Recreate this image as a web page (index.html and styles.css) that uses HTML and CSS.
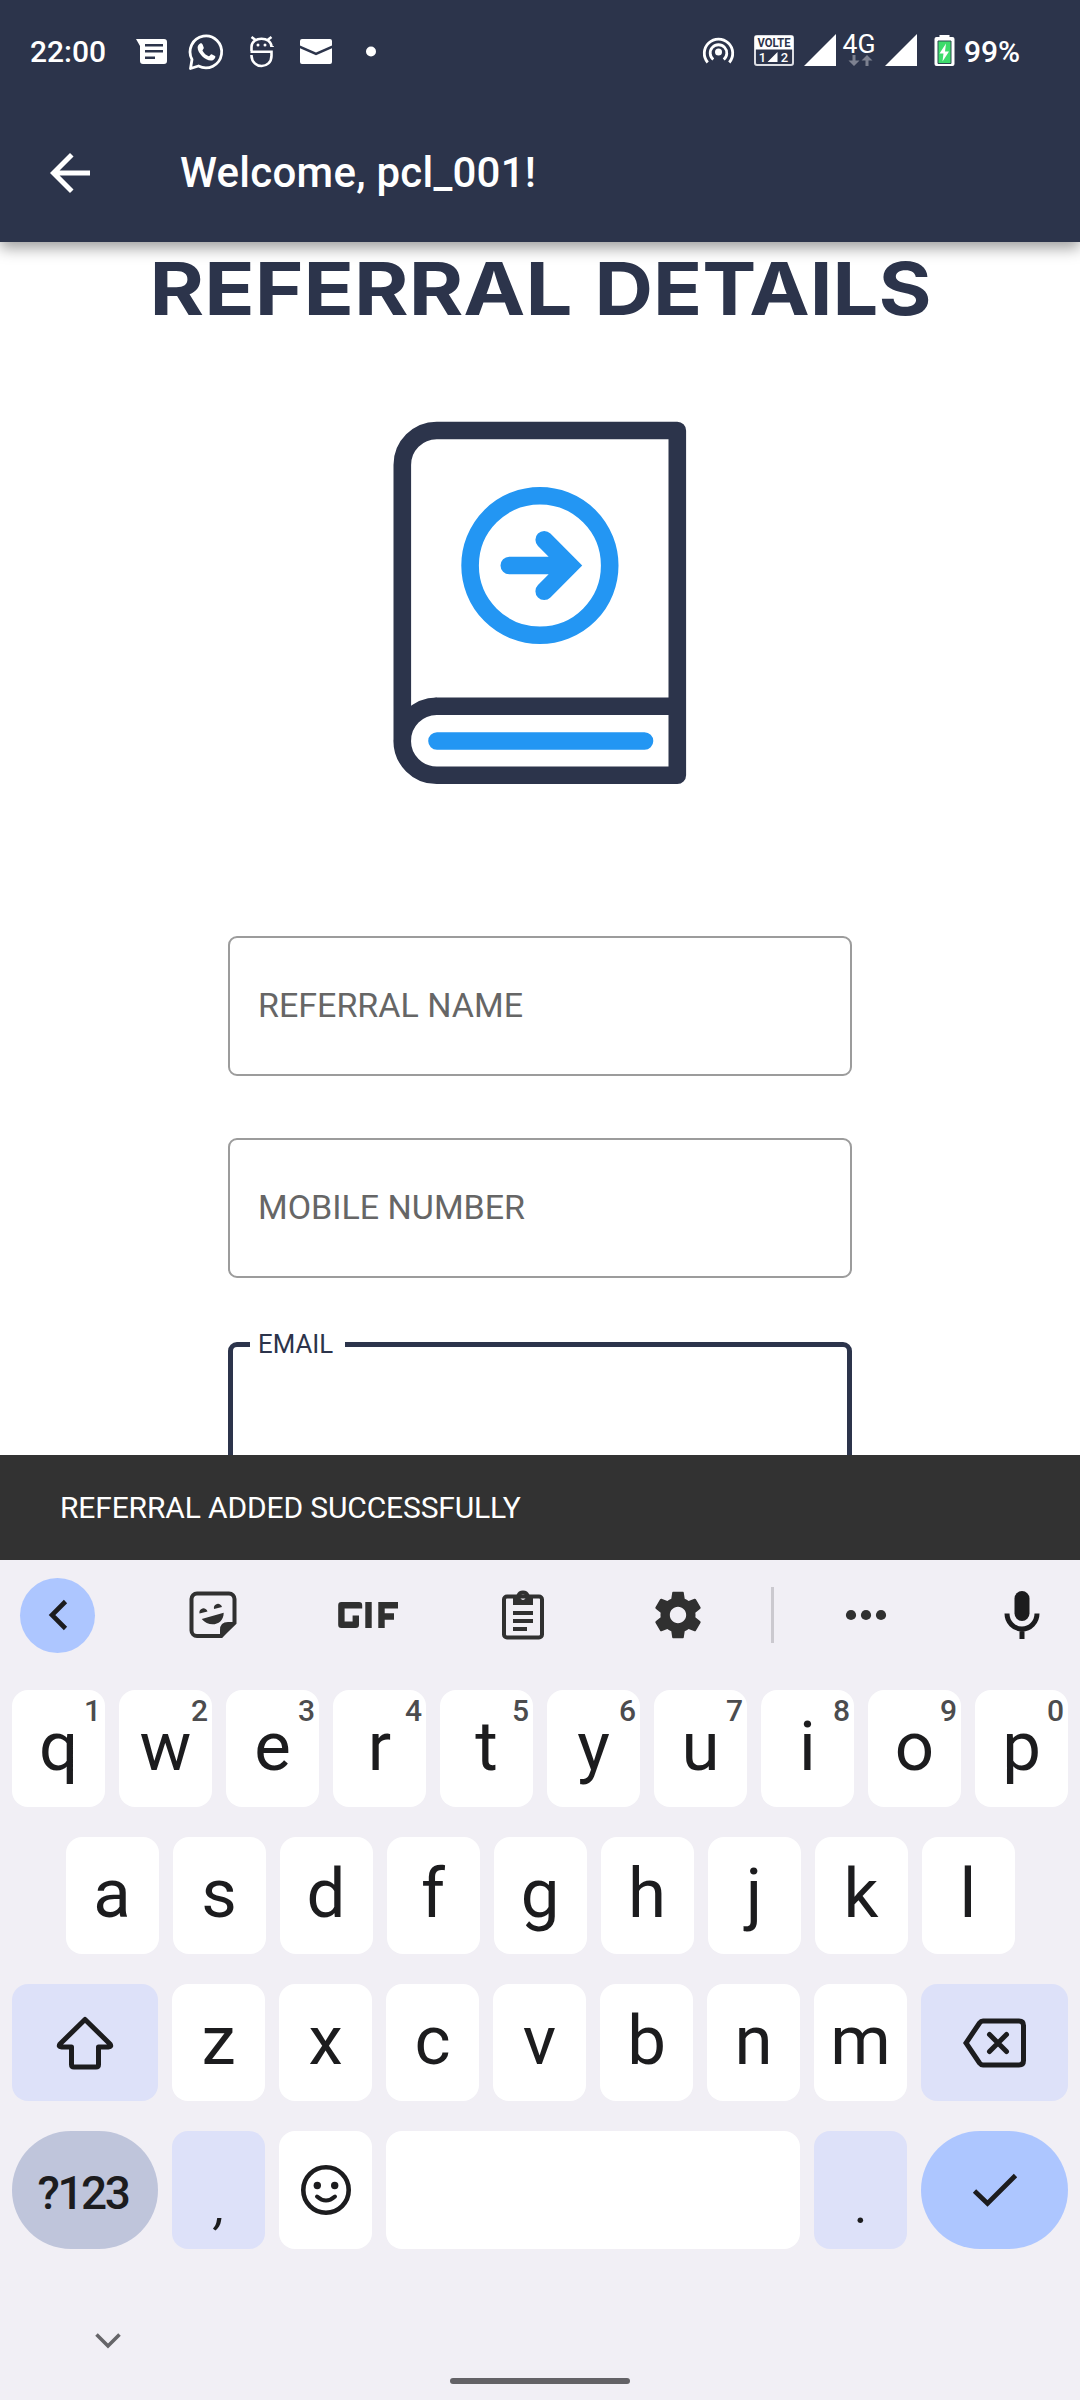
FILE: index.html
```html
<!DOCTYPE html>
<html lang="en">
<head>
<meta charset="utf-8">
<title>Referral details</title>
<link rel="stylesheet" href="styles.css">
</head>
<body>
<div class="screen">
  <header class="top">
    <div class="status">
      <span class="clock">22:00</span>
      <svg class="notices" width="250" height="40" viewBox="132 32 250 40" fill="#fff">
        <path fill-rule="evenodd" d="M136 39h28a3 3 0 0 1 3 3v19a3 3 0 0 1-3 3h-21a3 3 0 0 1-3-3V46zM145 44v2.6h18V44zM145 50v2.6h18V50zM145 56.4V59h10v-2.6z"/>
        <path d="M192 59.500A15.800 16 0 1 1 198.500 66L190.500 68.500z" fill="none" stroke="#fff" stroke-width="2.800" stroke-linejoin="round"/>
        <path d="M198.500 45c2-2.500 3.500-2 4.300 0l1 2.700c.3 1-1.600 2.300-1.300 3 1.500 2.700 3.700 4.500 6.200 5.500.8.300 2-2.300 2.900-2l3.400 1.800c1 .6-.3 3.200-1.700 4-5.500 3-15.600-6-15.700-12.500 0-1 .3-1.800.9-2.500z"/>
        <g fill="none" stroke="#fff" stroke-width="2.600"><path d="M251.500 51v-4c0-11 20-11 20 0M251.500 37l4 3M271.500 37l-4 3M250.500 51.800h21v4c0 13.500-19.500 13.500-20 0v-.8M272.500 46v1"/></g>
        <circle cx="258" cy="45" r="1.500"/><circle cx="265" cy="45" r="1.500"/>
        <path d="M302 39h28a2 2 0 0 1 2 2v4.500l-16 7-16-7V41a2 2 0 0 1 2-2zM300 48.300l16 7 16-7V62a2 2 0 0 1-2 2h-28a2 2 0 0 1-2-2z"/>
        <circle cx="371" cy="51.500" r="5"/>
      </svg>
      <svg class="signals" width="256" height="60" viewBox="700 22 256 60" fill="#fff">
        <circle cx="718.500" cy="52" r="3.500"/>
        <g fill="none" stroke="#fff" stroke-width="2.800"><path d="M713.300 59.500A8.300 8.300 0 1 1 723.700 59.500M707.700 62.500A14.200 14.200 0 1 1 729.300 62.500"/></g>
        <rect x="755" y="36" width="38" height="29" rx="2" fill="none" stroke="#dcdde2" stroke-width="2"/>
        <path d="M755 36h38v13.500h-38z"/>
        <text class="volte" x="774" y="47.300" textLength="33" lengthAdjust="spacingAndGlyphs">VOLTE</text>
        <text class="sim" x="762.500" y="62">1</text><text class="sim" x="784.500" y="62">2</text>
        <path d="M767.500 62h10V52zM804 66h32V34zM885 66h32V34z"/>
        <text class="net" x="859" y="52.500" textLength="33" lengthAdjust="spacingAndGlyphs">4G</text>
        <path fill="#7d8190" d="M852.500 55h3v5.500h4l-5.500 5.500-5.500-5.500h4zM865.500 66h3v-5.500h4L867 55l-5.500 5.500h4z"/>
        <path d="M939.500 35h10v2h3a2 2 0 0 1 2 2v25a2 2 0 0 1-2 2h-16a2 2 0 0 1-2-2V39a2 2 0 0 1 2-2h3z"/>
        <path fill="#3ddc6b" stroke="#2c4a50" d="M938 41h13v22.500h-13z"/><path d="M946 43.500l-6.500 10h4l-1 8 6.500-10h-4z"/>
      </svg>
      <span class="percent">99%</span>
    </div>
    <div class="appbar">
      <svg width="60" height="60" viewBox="0 0 24 24" fill="#fff"><path d="M20 11H7.830l5.590-5.590L12 4l-8 8 8 8 1.410-1.410L7.830 13H20v-2z"/></svg>
      <span class="title">Welcome, pcl_001!</span>
    </div>
  </header>
  <main class="page">
    <h1 class="heading"><svg width="1080" height="110" viewBox="0 0 1080 110"><text x="149.500" y="73" textLength="423" lengthAdjust="spacingAndGlyphs">REFERRAL</text><text x="594.500" y="73" textLength="337" lengthAdjust="spacingAndGlyphs">DETAILS</text></svg></h1>
    <svg class="book" width="294" height="364" viewBox="393.500 420.500 294 364" fill="none" stroke-width="17.600">
      <path stroke="#2c344b" stroke-linejoin="round" d="M402.800 740.300V464.400A34.400 34.400 0 0 1 437.200 430H677.800V774.800H437.200A34.500 34.500 0 0 1 437.200 705.700H677.800M402.800 740.300A34.500 34.500 0 0 1 437.200 705.700"/>
      <circle cx="540.400" cy="565" r="69.800" stroke="#2396f3"/>
      <path stroke="#2396f3" stroke-linecap="round" d="M509.800 565H566M544.700 539.300L570.300 565 544.700 590.700M437.500 740.500H645"/>
    </svg>
    <div class="field"><span>REFERRAL NAME</span></div>
    <div class="field"><span>MOBILE NUMBER</span></div>
    <fieldset class="field active"><legend>EMAIL</legend></fieldset>
  </main>
  <div class="snackbar">REFERRAL ADDED SUCCESSFULLY</div>
  <section class="keyboard">
    <div class="tools">
      <span class="round"><svg width="20" height="32" viewBox="0 0 20 32" fill="none" stroke="#1c1c1e" stroke-width="4.600"><path d="M17.500 2.500L4 16l13.500 13.500"/></svg></span>
      <svg class="t-sticker" width="48" height="48" viewBox="0 0 48 48" fill="#303030"><path d="M32 45H8a5.500 5.500 0 0 1-5.500-5.500V8A5.500 5.500 0 0 1 8 2.500h32A5.500 5.500 0 0 1 45.500 8v24z" fill="none" stroke="#303030" stroke-width="4"/><path d="M31 47V39q0-8 8-8h8L33 47zM10.500 22.500a4.100 4.100 0 0 1 8-2.100zM25 18a4.100 4.100 0 0 1 8-2.100zM12.700 28l22-6.300c0 13-15 15-22 6.300z"/></svg>
      <svg class="t-gif" width="62" height="28" viewBox="0 0 62 28" fill="none" stroke="#303030" stroke-width="6.400"><path d="M22 7.500V4.200H4.400v19.600H18.800V14.500" stroke-linejoin="round"/><path d="M31.500 1v26M44.500 27V4.200H61M44 15.500h13"/></svg>
      <svg class="t-clip" width="44" height="52" viewBox="0 0 44 52" fill="#303030"><rect x="3" y="7.500" width="38" height="41" rx="3" fill="none" stroke="#303030" stroke-width="4"/><path fill-rule="evenodd" d="M12 6h3.500a7 7 0 0 1 13 0H32v10H12zM22 5.500a2.700 2.700 0 1 0 .01 0zM12 22h20v4H12zM12 30h20v4H12zM12 38h14v4H12z"/></svg>
      <svg class="t-gear" width="56" height="56" viewBox="0 0 24 24" fill="#303030"><path d="M19.430 12.980c.04-.32.07-.64.07-.98s-.03-.66-.07-.98l2.110-1.650c.19-.15.240-.42.120-.64l-2-3.460c-.12-.22-.39-.3-.61-.22l-2.490 1c-.52-.4-1.080-.73-1.690-.98l-.38-2.650C14.460 2.180 14.250 2 14 2h-4c-.25 0-.46.180-.49.420l-.38 2.650c-.61.250-1.170.590-1.690.980l-2.490-1c-.23-.09-.49 0-.61.220l-2 3.460c-.13.220-.07.490.12.640l2.110 1.650c-.04.320-.07.650-.07.980s.03.660.07.980l-2.110 1.650c-.19.150-.24.420-.12.640l2 3.460c.12.220.39.300.61.220l2.490-1c.52.400 1.080.730 1.690.980l.38 2.650c.03.240.24.420.49.420h4c.25 0 .46-.18.490-.42l.38-2.650c.61-.25 1.170-.59 1.690-.98l2.490 1c.23.090.49 0 .61-.22l2-3.460c.12-.22.070-.49-.12-.64l-2.110-1.650zM12 15.500c-1.930 0-3.500-1.570-3.500-3.500s1.570-3.500 3.500-3.500 3.500 1.570 3.500 3.500-1.570 3.500-3.500 3.500z"/></svg>
      <span class="divider"></span>
      <svg class="t-dots" width="42" height="12" viewBox="0 0 42 12" fill="#303030"><circle cx="6" cy="6" r="5.100"/><circle cx="21" cy="6" r="5.100"/><circle cx="36" cy="6" r="5.100"/></svg>
      <svg class="t-mic" width="36" height="50" viewBox="0 0 36 50" fill="#1c1c1e"><rect x="10.500" y="1" width="15" height="30" rx="7.500"/><path d="M3 23.500a15 15.500 0 0 0 30 0M18 39v10" fill="none" stroke="#1c1c1e" stroke-width="5"/></svg>
    </div>
    <div class="row">
      <div class="key">q<sup>1</sup></div><div class="key">w<sup>2</sup></div><div class="key">e<sup>3</sup></div><div class="key">r<sup>4</sup></div><div class="key">t<sup>5</sup></div><div class="key">y<sup>6</sup></div><div class="key">u<sup>7</sup></div><div class="key">i<sup>8</sup></div><div class="key">o<sup>9</sup></div><div class="key">p<sup>0</sup></div>
    </div>
    <div class="row">
      <div class="key">a</div><div class="key">s</div><div class="key">d</div><div class="key">f</div><div class="key">g</div><div class="key">h</div><div class="key">j</div><div class="key">k</div><div class="key">l</div>
    </div>
    <div class="row">
      <div class="key wide soft"><svg width="58" height="56" viewBox="0 0 58 56" fill="none" stroke="#1c1c1e" stroke-width="5" stroke-linejoin="round"><path d="M29 4.500L54 29q2 3-1.500 3H42.500v17.500q0 2.500-2.500 2.500H18q-2.500 0-2.500-2.500V32H5.500Q2 32 4 29z"/></svg></div>
      <div class="key">z</div><div class="key">x</div><div class="key">c</div><div class="key">v</div><div class="key">b</div><div class="key">n</div><div class="key">m</div>
      <div class="key wider soft"><svg width="64" height="52" viewBox="0 0 64 52" fill="none" stroke="#1c1c1e" stroke-width="5"><path d="M20 4H56q4.500 0 4.500 4.500v35q0 4.500-4.500 4.500H20q-2 0-3.500-2L3 26 16.500 6Q18 4 20 4z"/><path stroke-linecap="round" d="M26.500 17.500l17 17M43.500 17.500l-17 17"/></svg></div>
    </div>
    <div class="row last">
      <div class="key wide symbols">?123</div>
      <div class="key soft punct comma">,</div>
      <div class="key"><svg width="52" height="52" viewBox="0 0 52 52" fill="#1c1c1e"><circle cx="26" cy="26" r="22.700" fill="none" stroke="#1c1c1e" stroke-width="4.600"/><circle cx="17.300" cy="21.500" r="3.700"/><circle cx="34.700" cy="21.500" r="3.700"/><path d="M17 32.500q9 8 18 0" fill="none" stroke="#1c1c1e" stroke-width="4" stroke-linecap="round"/></svg></div>
      <div class="key space"></div>
      <div class="key soft punct">.</div>
      <div class="key wider enter"><svg width="46" height="36" viewBox="0 0 46 36" fill="none" stroke="#1c1c1e" stroke-width="4.800"><path d="M2.500 19L15.500 31.500 43.500 3.500"/></svg></div>
    </div>
    <div class="nav">
      <svg width="26" height="18" viewBox="0 0 26 18" fill="none" stroke="#666569" stroke-width="3.600"><path d="M1.500 2.500L13 14 24.500 2.500"/></svg>
      <span class="home"></span>
    </div>
  </section>
</div>
</body>
</html>
```
FILE: styles.css
```css
* { box-sizing: border-box; }
body { margin: 0; background: #fff; font-family: Roboto, sans-serif; }
svg { display: block; flex: none; }
.screen { width: 1080px; height: 2400px; display: flex; flex-direction: column; overflow: hidden; }

.top { flex: none; height: 242px; background: #2c344b; color: #fff; position: relative; z-index: 1; box-shadow: 0 6px 14px rgba(0,0,0,.38); }
.status { height: 103px; display: flex; align-items: center; padding-left: 30px; font-size: 30px; font-weight: 500; line-height: 40px; }
.clock { width: 102px; }
.signals { margin-left: 318px; }
.percent { margin-left: 8px; }
.volte { font: 700 12px Roboto, sans-serif; fill: #2c344b; text-anchor: middle; }
.sim { font: 500 13px Roboto, sans-serif; text-anchor: middle; }
.net { font: 400 26px Roboto, sans-serif; text-anchor: middle; }
.appbar { height: 139px; display: flex; align-items: center; padding-left: 40px; gap: 80px; }
.title { font-size: 42px; font-weight: 500; line-height: 60px; letter-spacing: .25px; }

.page { flex: none; height: 1213px; overflow: hidden; display: flex; flex-direction: column; align-items: center; }
.heading { flex: none; margin: 0; height: 179px; color: #2c344b; }
.heading text { font: 700 73px Inter, sans-serif; fill: #2c344b; }
.book { margin-bottom: 151px; }
.field { flex: none; width: 624px; height: 140px; margin: 0 0 62px; border: 2px solid #9c9c9c; border-radius: 9px; display: flex; align-items: center; padding: 0 28px 2px; font-size: 34px; color: #666; }
.field.active { display: block; height: 150px; margin-top: -9px; border: 5px solid #2c344b; padding: 0 17px; }
.active legend { font-size: 25.800px; line-height: 26px; color: #2c344b; padding: 0 12px 0 8px; }

.snackbar { flex: none; height: 105px; background: #323232; color: #fff; font-size: 30px; letter-spacing: -.14px; line-height: 105px; padding-left: 60px; }

.keyboard { flex: none; height: 840px; background: #f1eff5; color: #1c1c1e; }
.tools { height: 130px; display: flex; align-items: center; padding: 0 40px 20px 20px; }
.round { width: 75px; height: 75px; border-radius: 50%; background: #adc6ff; display: flex; align-items: center; justify-content: center; }
.t-sticker { margin-left: 94px; }
.t-gif { margin-left: 100px; }
.t-clip { margin-left: 102px; }
.t-gear { margin-left: 105px; }
.divider { width: 3px; height: 56px; background: #cbc9cf; margin-left: 65px; }
.t-dots { margin-left: 71px; }
.t-mic { margin-left: 117px; }
.row { display: flex; justify-content: center; gap: 14px; margin-bottom: 30px; }
.key { position: relative; width: 93px; height: 117px; border-radius: 16px; background: #fff; display: flex; align-items: center; justify-content: center; font-size: 69px; line-height: 113px; padding-bottom: 4px; }
.key:has(svg) { padding-bottom: 0; }
.key sup { position: absolute; right: 4px; top: 4px; font-size: 30px; font-weight: 500; line-height: 34px; color: #4c4c4e; }
.wide { width: 146px; }
.wider { width: 147px; }
.soft { background: #dde1f9; }
.last .key { height: 118px; }
.last .space { width: 414px; }
.last .symbols { background: #bfc5db; border-radius: 59px; font-size: 46px; font-weight: 500; letter-spacing: -2.500px; padding: 6px 4px 0 0; }
.last .punct { font-size: 50px; padding: 32px 0 0; }
.last .comma { font-style: italic; padding-left: 4px; }
.last .enter { background: #adc6ff; border-radius: 59px; }
.nav { height: 121px; display: flex; align-items: flex-start; padding: 53px 0 0 95px; }
.home { width: 180px; height: 6px; border-radius: 3px; background: #636266; margin: 46px 0 0 329px; }
```
